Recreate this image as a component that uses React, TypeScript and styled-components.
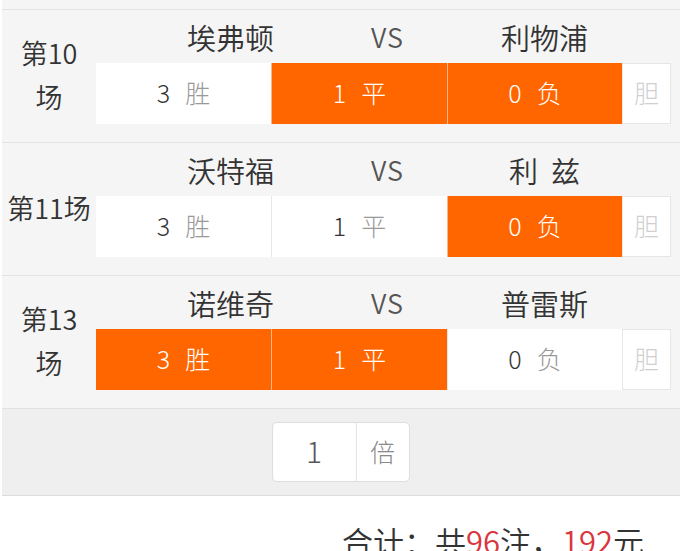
import styled, { createGlobalStyle } from "styled-components";

const GlobalStyle = createGlobalStyle`
  body {
    margin: 0;
    background: #ffffff;
    font-family: "Noto Sans CJK SC", "Noto Sans", sans-serif;
    font-weight: 350;
  }
`;

const Page = styled.div`
  width: 680px;
  height: 551px;
  overflow: hidden;
  padding-left: 2px;
  box-sizing: border-box;
`;

const TopStrip = styled.div`
  height: 9px;
  background: #f5f5f5;
  border-bottom: 1px solid #e2e2e2;
`;

const MatchRow = styled.div`
  display: grid;
  grid-template-columns: 94px 1fr;
  background: #f5f5f5;
  border-bottom: 1px solid #e2e2e2;
  height: 133px;
  box-sizing: border-box;
`;

const Label = styled.div`
  display: flex;
  flex-direction: column;
  align-items: center;
  justify-content: center;
  color: #333;
  font-size: 27px;
  line-height: 44px;
  white-space: nowrap;
  padding-bottom: 3px;
`;

const Content = styled.div`
  display: flex;
  flex-direction: column;
  padding-right: 11px;
`;

const Teams = styled.div`
  display: grid;
  grid-template-columns: 56px 157px 157px 157px;
  height: 53px;
  align-items: center;
  color: #333;
`;

const TeamName = styled.div<{ $muted?: boolean }>`
  text-align: center;
  color: ${(p) => (p.$muted ? "#555" : "#333")};
  font-size: ${(p) => (p.$muted ? "27px" : "29px")};
  letter-spacing: ${(p) => (p.$muted ? "1px" : "0")};
  white-space: pre;
`;

const Options = styled.div`
  display: grid;
  grid-template-columns: 174px 176px 175px 48px;
  height: 61px;
  border: 1px solid #e6e6e6;
  box-sizing: border-box;
  background: #fff;
`;

const Option = styled.div<{ $on: boolean }>`
  display: flex;
  align-items: center;
  justify-content: center;
  gap: 15px;
  font-size: 25px;
  font-weight: 300;
  padding-bottom: 4px;
  background: ${(p) => (p.$on ? "#ff6600" : "#ffffff")};
  border-left: 1px solid ${(p) => (p.$on ? "#f7b98c" : "#e6e6e6")};
  margin: -1px 0;
  &:first-child {
    border-left: none;
    margin-left: -1px;
  }
`;

const Num = styled.span<{ $on: boolean }>`
  color: ${(p) => (p.$on ? "#fff" : "#333")};
`;

const Word = styled.span<{ $on: boolean }>`
  color: ${(p) => (p.$on ? "#fff" : "#999")};
`;

const Dan = styled.div`
  display: flex;
  align-items: center;
  justify-content: center;
  font-size: 25px;
  font-weight: 300;
  padding-bottom: 4px;
  color: #cfcfcf;
  border-left: 1px solid #e6e6e6;
`;

const MultiBar = styled.div`
  display: flex;
  justify-content: center;
  background: #efefef;
  border-bottom: 1px solid #dcdcdc;
  padding: 13px 0 13px;
`;

const MultiBox = styled.div`
  display: grid;
  grid-template-columns: 84px 52px;
  height: 60px;
  margin-left: -1px;
  background: #fff;
  border: 1px solid #dedede;
  border-radius: 5px;
  box-sizing: border-box;
`;

const MultiValue = styled.div`
  display: flex;
  align-items: center;
  justify-content: center;
  font-size: 30px;
  font-weight: 300;
  padding-bottom: 4px;
  color: #555;
  border-right: 1px solid #e3e3e3;
`;

const MultiUnit = styled.div`
  display: flex;
  align-items: center;
  justify-content: center;
  font-size: 25px;
  font-weight: 300;
  padding-bottom: 2px;
  color: #888;
`;

const Total = styled.div`
  text-align: right;
  padding: 25px 36px 0 0;
  font-size: 31px;
  line-height: 40px;
  color: #333;
`;

const Red = styled.span`
  color: #d9363e;
`;

type Match = {
  label: string[];
  home: string;
  away: string;
  picks: boolean[];
};

const matches: Match[] = [
  { label: ["第10", "场"], home: "埃弗顿", away: "利物浦", picks: [false, true, true] },
  { label: ["第11场"], home: "沃特福", away: "利  兹", picks: [false, false, true] },
  { label: ["第13", "场"], home: "诺维奇", away: "普雷斯", picks: [true, true, false] },
];

const outcomes = [
  { num: "3", word: "胜" },
  { num: "1", word: "平" },
  { num: "0", word: "负" },
];

export default function App() {
  return (
    <Page>
      <GlobalStyle />
      <TopStrip />
      {matches.map((m) => (
        <MatchRow key={m.home}>
          <Label>
            {m.label.map((l) => (
              <span key={l}>{l}</span>
            ))}
          </Label>
          <Content>
            <Teams>
              <span />
              <TeamName>{m.home}</TeamName>
              <TeamName $muted>VS</TeamName>
              <TeamName>{m.away}</TeamName>
            </Teams>
            <Options>
              {outcomes.map((o, i) => (
                <Option key={o.num} $on={m.picks[i]}>
                  <Num $on={m.picks[i]}>{o.num}</Num>
                  <Word $on={m.picks[i]}>{o.word}</Word>
                </Option>
              ))}
              <Dan>胆</Dan>
            </Options>
          </Content>
        </MatchRow>
      ))}
      <MultiBar>
        <MultiBox>
          <MultiValue>1</MultiValue>
          <MultiUnit>倍</MultiUnit>
        </MultiBox>
      </MultiBar>
      <Total>
        合计：共<Red>96</Red>注，<Red>192</Red>元
      </Total>
    </Page>
  );
}
